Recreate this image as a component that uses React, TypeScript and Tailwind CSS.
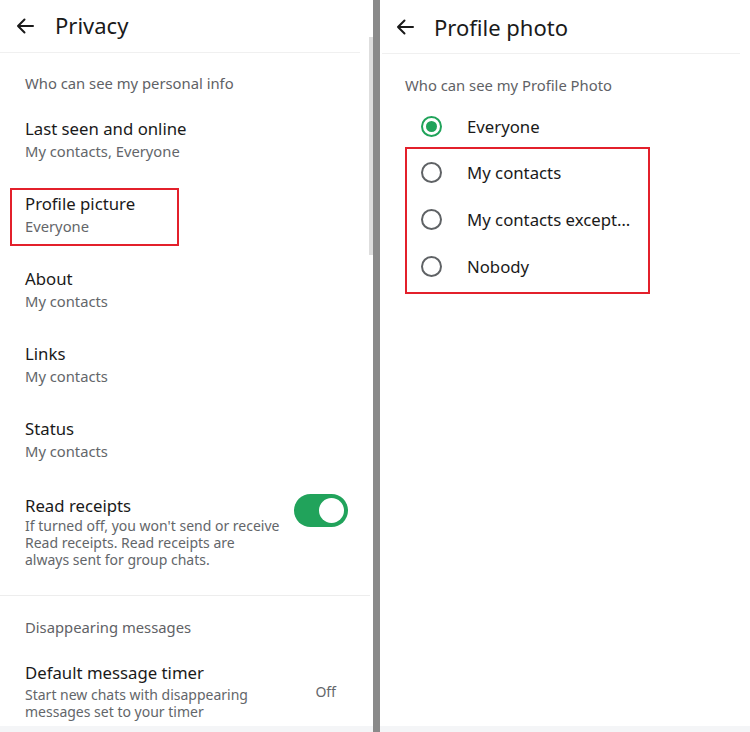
import React from "react";

const Arrow = () => (
  <svg width="18" height="16" viewBox="0 0 18 16" fill="none">
    <path d="M17 8H2M8.5 1.5L2 8l6.5 6.5" stroke="#1a1a1a" strokeWidth="2" strokeLinecap="round" strokeLinejoin="round" />
  </svg>
);

type Item = { title: string; sub: string; boxed?: boolean };

const items: Item[] = [
  { title: "Last seen and online", sub: "My contacts, Everyone" },
  { title: "Profile picture", sub: "Everyone", boxed: true },
  { title: "About", sub: "My contacts" },
  { title: "Links", sub: "My contacts" },
  { title: "Status", sub: "My contacts" },
];

const Radio = ({ on }: { on?: boolean }) =>
  on ? (
    <div className="w-[21px] h-[21px] rounded-full border-2 border-[#20a35a] flex items-center justify-center shrink-0">
      <div className="w-[11px] h-[11px] rounded-full bg-[#20a35a]" />
    </div>
  ) : (
    <div className="w-[21px] h-[21px] rounded-full border-2 border-[#5f6265] shrink-0" />
  );

export default function App() {
  const font = { fontFamily: "'Noto Sans', Roboto, sans-serif" };
  return (
    <div className="w-[750px] h-[732px] flex bg-white overflow-hidden" style={font}>
      {/* Left panel */}
      <div className="relative w-[373px] h-full flex flex-col">
        <div className="h-[52px] flex items-center pl-[16px] pr-[13px]">
          <Arrow />
          <div className="ml-[21px] text-[22px] text-[#1a1a1a] leading-none -mt-[2px]">Privacy</div>
        </div>
        <div className="h-px bg-[#f0f0f0] w-[360px]" />
        <div className="mt-[20px] px-[25px] text-[14.8px] leading-[20px] text-[#5f6266]">Who can see my personal info</div>
        <div className="mt-[17px]">
          {items.map((it) => (
            <div key={it.title} className="relative h-[75px] pt-[8px] px-[25px]">
              {it.boxed && (
                <div className="absolute left-[10px] top-[3px] w-[169px] h-[58px] border-2 border-[#e3202b]" />
              )}
              <div className="text-[16.75px] leading-[22px] text-[#1a1a1a]">{it.title}</div>
              <div className="text-[14.75px] leading-[22px] text-[#63666a]">{it.sub}</div>
            </div>
          ))}
          <div className="flex items-start pt-[10px] pl-[25px] pr-[25px]">
            <div className="flex-1">
              <div className="text-[16.75px] leading-[22px] text-[#1a1a1a]">Read receipts</div>
              <div className="text-[14px] leading-[17px] text-[#63666a] whitespace-nowrap">
                If turned off, you won't send or receive
                <br />
                Read receipts. Read receipts are
                <br />
                always sent for group chats.
              </div>
            </div>
            <div className="mt-[-1px] w-[54px] h-[33px] rounded-full bg-[#21a35b] flex items-center justify-end pr-[4px]">
              <div className="w-[25px] h-[25px] rounded-full bg-white" />
            </div>
          </div>
        </div>
        <div className="mt-[27px] h-px bg-[#ededed] w-[370px]" />
        <div className="mt-[21px] px-[25px] text-[14.8px] leading-[20px] text-[#5f6266]">Disappearing messages</div>
        <div className="mt-[25px] flex items-start px-[25px]">
          <div className="flex-1">
            <div className="text-[16.75px] leading-[22px] text-[#1a1a1a]">Default message timer</div>
            <div className="mt-[2px] text-[14px] leading-[17px] text-[#63666a]">
              Start new chats with disappearing
              <br />
              messages set to your timer
            </div>
          </div>
          <div className="text-[14px] leading-[20px] text-[#63666a] mr-[12px] mt-[20px]">Off</div>
        </div>
        <div className="flex-1" />
        <div className="h-[6px] bg-[#f4f5f7]" />
        <div className="absolute right-0 top-[37px] w-[4px] h-[218px] bg-[#dedede]" />
      </div>
      {/* Divider */}
      <div className="w-[7px] h-full bg-[#8a8a8a]" />
      {/* Right panel */}
      <div className="flex-1 h-full flex flex-col">
        <div className="h-[53px] flex items-center pl-[16px]">
          <Arrow />
          <div className="ml-[20px] text-[22px] text-[#1a1a1a] leading-none">Profile photo</div>
        </div>
        <div className="h-px bg-[#f0f0f0] ml-[2px] w-[358px]" />
        <div className="mt-[21px] pl-[25px] text-[14.8px] leading-[20px] text-[#5f6266]">Who can see my Profile Photo</div>
        <div className="mt-[20px] pl-[41px] h-[23px] flex items-center">
          <Radio on />
          <div className="ml-[25px] text-[16.75px] text-[#1a1a1a]">Everyone</div>
        </div>
        <div className="ml-[25px] mt-[9px] w-[245px] h-[147px] border-2 border-[#e3202b] flex flex-col pt-[12px] gap-[24px]">
          {["My contacts", "My contacts except…", "Nobody"].map((t) => (
            <div key={t} className="pl-[14px] h-[23px] flex items-center">
              <Radio />
              <div className="ml-[25px] text-[16.75px] text-[#1a1a1a] whitespace-nowrap">{t}</div>
            </div>
          ))}
        </div>
        <div className="flex-1" />
        <div className="h-[6px] bg-[#f4f5f7]" />
      </div>
    </div>
  );
}
